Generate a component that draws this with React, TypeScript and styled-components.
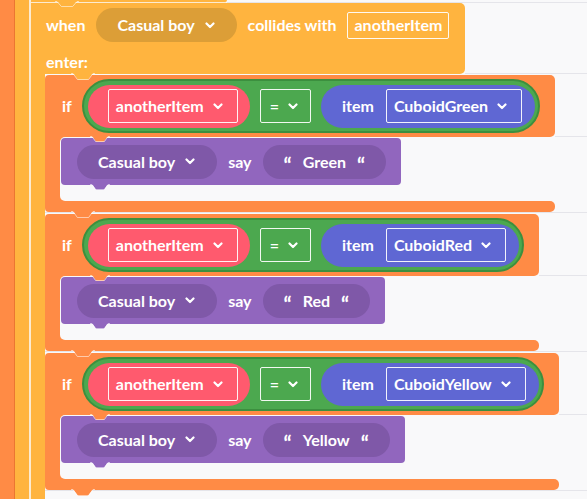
import React from "react";
import styled, { createGlobalStyle } from "styled-components";

const C = {
  bg: "#F9F9FA",
  line: "#E5E5EA",
  orange: "#FF8B45",
  orangeEdge: "#EB7632",
  yellow: "#FFB43F",
  yellowDark: "#DC9E37",
  seam: "#FCEBD1",
  green: "#4CA84F",
  greenEdge: "#3C8F3F",
  red: "#FF5A6E",
  blue: "#5F67D3",
  purple: "#9166BE",
  purpleDark: "#7F58A8",
};

const GlobalStyle = createGlobalStyle`
  html, body {
    margin: 0;
    padding: 0;
    background: ${C.bg};
    overflow: hidden;
  }
  body {
    font-family: Lato, "Noto Sans", sans-serif;
  }
`;

const Page = styled.div`
  display: flex;
  width: 587px;
  height: 499px;
  overflow: hidden;
  background: ${C.bg};
`;

const Rail = styled.div<{ $color: string; $edge?: string }>`
  flex: 0 0 14px;
  background: ${(p) => p.$color};
  border-right: ${(p) => (p.$edge ? `1px solid ${p.$edge}` : "none")};
`;

const WhenColumn = styled.div`
  flex: 1;
  min-width: 0;
  display: flex;
  flex-direction: column;
  border-left: 2px solid ${C.seam};
`;

const LineRow = styled.div`
  display: flex;
  align-items: stretch;
`;

const Rule = styled.div`
  flex: 1;
  border-bottom: 1px solid ${C.line};
`;

const StubBar = styled.div`
  position: relative;
  width: 196px;
  height: 2px;
  background: ${C.yellow};
  border-bottom: 1px solid ${C.seam};
  border-bottom-right-radius: 3px;
`;

const WhenHeader = styled.div`
  position: relative;
  display: flex;
  flex-direction: column;
  height: 71px;
  box-sizing: border-box;
  padding: 5px 16px 0 15px;
  background: ${C.yellow};
  border-radius: 0 5px 5px 0;
`;

const BlockLine = styled.div`
  display: flex;
  align-items: center;
  gap: 11px;
  height: 34px;
`;

const EnterLine = styled.div`
  display: flex;
  align-items: center;
  height: 22px;
  margin-top: 9px;
`;

const Label = styled.span`
  color: #fff;
  font-weight: 700;
  font-size: 16px;
  line-height: 1;
  white-space: nowrap;
`;

const Pill = styled.div<{ $bg: string }>`
  display: flex;
  align-items: center;
  gap: 10px;
  height: 34px;
  padding: 0 22px 0 21px;
  border-radius: 17px;
  background: ${(p) => p.$bg};
`;

const FieldBox = styled.div<{ $h: number; $pad: string }>`
  display: flex;
  align-items: center;
  gap: 9px;
  height: ${(p) => p.$h}px;
  box-sizing: border-box;
  padding: ${(p) => p.$pad};
  border: 1.5px solid rgba(255, 255, 255, 0.92);
  border-radius: 2px;
`;

const WhenBody = styled.div`
  flex: 1;
  display: flex;
`;

const Arm = styled.div`
  flex: 0 0 14px;
  background: ${C.yellow};
`;

const Stack = styled.div`
  flex: 1;
  display: flex;
  flex-direction: column;
`;

const IfBlock = styled.div`
  display: grid;
  grid-template-columns: auto 1fr;
  margin-top: 1px;
  border-bottom: 1px solid ${C.line};
`;

const IfHeader = styled.div`
  position: relative;
  display: flex;
  align-items: center;
  gap: 10px;
  height: 62px;
  box-sizing: border-box;
  padding: 0 15px 0 17px;
  background: ${C.orange};
  border-radius: 4px 5px 5px 0;
`;

const IfBody = styled.div`
  grid-column: 1 / -1;
  display: flex;
  padding-left: 15px;
  background: linear-gradient(to right, ${C.orange} 20px, transparent 20px);
`;

const IfInner = styled.div`
  flex: 1;
  display: flex;
  align-items: flex-start;
  padding: 1px 0 16px 1px;
  background: ${C.bg};
  border-radius: 5px 0 0 5px;
`;

const IfFooter = styled.div`
  grid-column: 1;
  position: relative;
  height: 11px;
  background: ${C.orange};
  border-radius: 0 5px 5px 4px;
`;

const Cond = styled.div`
  display: flex;
  align-items: center;
  gap: 10px;
  height: 54px;
  box-sizing: border-box;
  padding: 0 3px 0 4px;
  border: 2px solid ${C.greenEdge};
  border-radius: 27px;
  background: ${C.green};
`;

const Operand = styled.div<{ $bg: string; $pad: string }>`
  display: flex;
  align-items: center;
  gap: 12px;
  height: 43px;
  padding: ${(p) => p.$pad};
  border-radius: 22px;
  background: ${(p) => p.$bg};
`;

const SayBlock = styled.div`
  position: relative;
  display: flex;
  align-items: center;
  gap: 11px;
  height: 47px;
  box-sizing: border-box;
  padding: 0 15px 0 16px;
  background: ${C.purple};
  border-radius: 4px;
`;

const QuotePill = styled.div`
  display: flex;
  align-items: center;
  gap: 11px;
  height: 34px;
  padding: 0 21px;
  border-radius: 17px;
  background: ${C.purpleDark};
`;

const Quote = styled.span`
  color: #fff;
  font-weight: 700;
  font-size: 21px;
  line-height: 1;
  transform: translateY(3px);
`;

const TabSvg = styled.svg<{ $left: number }>`
  position: absolute;
  left: ${(p) => p.$left}px;
  top: calc(100% - 1px);
  z-index: 3;
  overflow: visible;
`;

const Tab = ({ color, left, w = 20, h = 7 }: { color: string; left: number; w?: number; h?: number }) => (
  <TabSvg $left={left} width={w} height={h} viewBox={`0 0 ${w} ${h}`}>
    <path d={`M0 0 L${w * 0.22} ${h - 1} Q${w * 0.25} ${h} ${w * 0.3} ${h} H${w * 0.7} Q${w * 0.75} ${h} ${w * 0.78} ${h - 1} L${w} 0 Z`} fill={color} />
    <path
      d={`M-2 0.5 H0 L${w * 0.22} ${h - 0.5} H${w * 0.78} L${w} 0.5 H${w + 2}`}
      fill="none"
      stroke="rgba(255,255,255,0.55)"
      strokeWidth={1}
    />
  </TabSvg>
);

const Chevron = () => (
  <svg width="10" height="7" viewBox="0 0 10 7">
    <polyline points="1.5,1.5 5,5 8.5,1.5" fill="none" stroke="#fff" strokeWidth="2.2" strokeLinecap="round" strokeLinejoin="round" />
  </svg>
);

const Dropdown = ({ text }: { text: string }) => (
  <FieldBox $h={34} $pad="0 14px 0 7px">
    <Label>{text}</Label>
    <Chevron />
  </FieldBox>
);

const CasualBoy = ({ bg }: { bg: string }) => (
  <Pill $bg={bg}>
    <Label>Casual boy</Label>
    <Chevron />
  </Pill>
);

const IfItem = ({ item, word }: { item: string; word: string }) => (
  <IfBlock>
    <IfHeader>
      <Label>if</Label>
      <Cond>
        <Operand $bg={C.red} $pad="0 12px 0 20px">
          <Dropdown text="anotherItem" />
        </Operand>
        <FieldBox $h={34} $pad="0 12px 0 9px">
          <Label>=</Label>
          <Chevron />
        </FieldBox>
        <Operand $bg={C.blue} $pad="0 13px 0 21px">
          <Label>item</Label>
          <Dropdown text={item} />
        </Operand>
      </Cond>
      <Tab color={C.orange} left={47} w={16} h={6} />
    </IfHeader>
    <Rule />
    <IfBody>
      <IfInner>
        <SayBlock>
          <CasualBoy bg={C.purpleDark} />
          <Label>say</Label>
          <QuotePill>
            <Quote>“</Quote>
            <Label>{word}</Label>
            <Quote>“</Quote>
          </QuotePill>
          <Tab color={C.purple} left={31} w={16} h={6} />
        </SayBlock>
      </IfInner>
    </IfBody>
    <IfFooter>
      <Tab color={C.orange} left={28} />
    </IfFooter>
  </IfBlock>
);

export default function App() {
  return (
    <>
      <GlobalStyle />
      <Page>
        <Rail $color={C.orange} $edge={C.orangeEdge} />
        <Rail $color={C.yellow} />
        <WhenColumn>
          <LineRow>
            <StubBar>
              <Tab color={C.yellow} left={26} h={6} />
            </StubBar>
            <Rule />
          </LineRow>
          <LineRow>
            <WhenHeader>
              <BlockLine>
                <Label>when</Label>
                <CasualBoy bg={C.yellowDark} />
                <Label>collides with</Label>
                <FieldBox $h={27} $pad="0 6px">
                  <Label>anotherItem</Label>
                </FieldBox>
              </BlockLine>
              <EnterLine>
                <Label>enter:</Label>
              </EnterLine>
              <Tab color={C.yellow} left={42} />
            </WhenHeader>
            <Rule />
          </LineRow>
          <WhenBody>
            <Arm />
            <Stack>
              <IfItem item="CuboidGreen" word="Green" />
              <IfItem item="CuboidRed" word="Red" />
              <IfItem item="CuboidYellow" word="Yellow" />
            </Stack>
          </WhenBody>
        </WhenColumn>
      </Page>
    </>
  );
}
